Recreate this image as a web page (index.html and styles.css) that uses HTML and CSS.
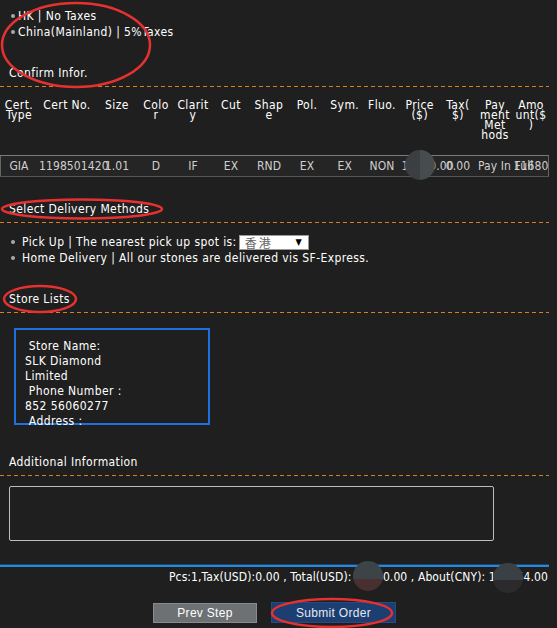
FILE: index.html
```html
<!DOCTYPE html>
<html>
<head>
<meta charset="utf-8">
<link rel="stylesheet" href="styles.css">
</head>
<body>
<div class="page">
  <ul class="tax-list">
    <li>HK | No Taxes</li>
    <li>China(Mainland) | 5%Taxes</li>
  </ul>

  <h3 class="sec-title first">Confirm Infor.</h3>
  <div class="cert-grid cert-head">
    <div class="cell">Cert.<br>Type</div>
    <div class="cell">Cert No.</div>
    <div class="cell">Size</div>
    <div class="cell">Colo<br>r</div>
    <div class="cell">Clarit<br>y</div>
    <div class="cell">Cut</div>
    <div class="cell">Shap<br>e</div>
    <div class="cell">Pol.</div>
    <div class="cell">Sym.</div>
    <div class="cell">Fluo.</div>
    <div class="cell">Price<br>($)</div>
    <div class="cell">Tax(<br>$)</div>
    <div class="cell">Pay<br>ment<br>Met<br>hods</div>
    <div class="cell">Amo<br>unt($<br>)</div>
  </div>
  <div class="cert-grid cert-row">
    <div class="cell">GIA</div>
    <div class="cell left">1198501420</div>
    <div class="cell">1.01</div>
    <div class="cell">D</div>
    <div class="cell">IF</div>
    <div class="cell">EX</div>
    <div class="cell">RND</div>
    <div class="cell">EX</div>
    <div class="cell">EX</div>
    <div class="cell">NON</div>
    <div class="cell left">11680.00</div>
    <div class="cell">0.00</div>
    <div class="cell left">Pay In Full</div>
    <div class="cell">11680</div>
  </div>

  <h3 class="sec-title">Select Delivery Methods</h3>
  <ul class="delivery-list">
    <li>Pick Up | The nearest pick up spot is:<span class="spot-select"><span class="spot-name">香港</span><span class="spot-arrow">▼</span></span></li>
    <li>Home Delivery | All our stones are delivered vis SF-Express.</li>
  </ul>

  <h3 class="sec-title">Store Lists</h3>
  <div class="store-box">
    <div>&nbsp;Store Name:</div>
    <div>SLK Diamond</div>
    <div>Limited</div>
    <div>&nbsp;Phone Number :</div>
    <div>852 56060277</div>
    <div>&nbsp;Address :</div>
  </div>

  <h3 class="sec-title">Additional Information</h3>
  <div class="note-box"></div>

  <div class="summary">Pcs:1,Tax(USD):0.00 , Total(USD): 11680.00 , About(CNY): 118054.00</div>

  <div class="actions">
    <button class="btn btn-prev">Prev Step</button>
    <button class="btn btn-submit">Submit Order</button>
  </div>

  <div class="blob blob-table"></div>
  <div class="blob blob-total"></div>
  <div class="blob blob-cny"></div>

  <svg class="marks" width="557" height="628" viewBox="0 0 557 628">
    <ellipse cx="76" cy="45" rx="74" ry="42" />
    <ellipse cx="82" cy="209" rx="80" ry="9.5" />
    <ellipse cx="40" cy="299" rx="36" ry="13" />
    <ellipse cx="332" cy="613" rx="60" ry="14" />
  </svg>
</div>
</body>
</html>
```

FILE: styles.css
```css
html, body {
  margin: 0;
  padding: 0;
}

body {
  background: #1f1f1f;
  color: #ffffff;
  font-family: "DejaVu Sans Condensed", "DejaVu Sans", sans-serif;
  font-stretch: condensed;
  font-size: 12px;
  letter-spacing: 0.4px;
}

.page {
  position: relative;
  width: 549px;
  height: 628px;
}

.tax-list {
  list-style: none;
  margin: 0;
  padding: 8px 0 0 11px;
  line-height: 16px;
}

.tax-list li,
.delivery-list li {
  display: flex;
  align-items: center;
}

.tax-list li::before,
.delivery-list li::before {
  content: "";
  width: 4px;
  height: 4px;
  border-radius: 50%;
  background: #a9a9a9;
  flex: none;
}

.tax-list li::before {
  margin-right: 3px;
}

.delivery-list li::before {
  margin-right: 7px;
}

.sec-title {
  margin: 25px 0 0;
  padding: 0 0 0 9px;
  font-size: 12px;
  font-weight: normal;
  line-height: 16px;
}

.sec-title::after {
  content: "";
  display: block;
  height: 1px;
  margin: 5px 0 0 -9px;
  background: repeating-linear-gradient(90deg, #d8801f 0 4px, transparent 4px 7px);
}

.cert-grid {
  display: grid;
  grid-template-columns: 38px 58px 42px 36px 38px 38px 38px 38px 37.5px 37px 38.5px 38px 36px 36px;
}

.cert-head {
  height: 68px;
  padding-top: 13px;
  box-sizing: border-box;
  line-height: 10px;
  align-items: start;
}

.cell {
  text-align: center;
  white-space: nowrap;
  min-width: 0;
}

.cell.left {
  text-align: left;
  padding-left: 1px;
}

.cert-row {
  height: 22px;
  line-height: 22px;
  color: #cfcfcf;
  background: #252525;
  letter-spacing: 0.1px;
  box-shadow: inset 0 1px #7a7a7a, inset 0 -1px #555555, inset 1px 0 #666666, inset -1px 0 #666666;
}

.cert-row + .sec-title {
  margin-top: 24px;
}

.delivery-list {
  list-style: none;
  margin: 11px 0 0;
  padding: 0 0 0 11px;
  line-height: 16px;
}

.spot-select {
  display: inline-flex;
  align-items: center;
  justify-content: space-between;
  width: 70px;
  height: 15px;
  margin-left: 2px;
  padding: 0 6px 0 5px;
  box-sizing: border-box;
  background: #ffffff;
  border: 1px solid #9a9a9a;
  color: #666666;
  font-family: "Noto Sans CJK SC", sans-serif;
  font-size: 12px;
  line-height: 13px;
  letter-spacing: 2px;
}

.spot-arrow {
  color: #000000;
  font-family: "DejaVu Sans", sans-serif;
  font-size: 9px;
  letter-spacing: 0;
}

.store-box {
  margin: 15px 0 0 14px;
  width: 196px;
  height: 97px;
  box-sizing: border-box;
  border: 2px solid #1f6fdc;
  padding: 9px 0 0 9px;
  line-height: 15px;
}

.store-box + .sec-title {
  margin-top: 29px;
}

.note-box {
  margin: 10px 0 0 9px;
  width: 485px;
  height: 55px;
  box-sizing: border-box;
  border: 1px solid #bdbdbd;
  border-radius: 2px;
}

.summary {
  margin-top: 24px;
  border-top: 2px solid #2b88d6;
  box-shadow: 0 -1px #154676;
  padding: 2px 1px 0 0;
  line-height: 16px;
  text-align: right;
  letter-spacing: 0.1px;
}

.actions {
  display: flex;
  justify-content: center;
  align-items: center;
  gap: 14px;
  margin-top: 17px;
}

.btn {
  font-family: "Liberation Sans", Arial, sans-serif;
  font-size: 12px;
  letter-spacing: 0.3px;
  padding: 0;
  margin: 0;
  box-sizing: border-box;
}

.btn-prev {
  width: 104px;
  height: 20px;
  background: #6e7174;
  border: 1px solid #8a8a8a;
  color: #ffffff;
}

.btn-submit {
  width: 125px;
  height: 21px;
  background: #1d3e70;
  border: 1px solid #254b82;
  color: #e2e8f2;
}

.blob {
  position: absolute;
  width: 30px;
  height: 30px;
  border-radius: 50%;
}

.blob-table {
  left: 405px;
  top: 150px;
  background: linear-gradient(90deg, #3b3f42 0 50%, #474c4e 50% 100%);
}

.blob-total {
  left: 353px;
  top: 561px;
  background: linear-gradient(180deg, #3c4448 0 60%, #4a2f30 60% 100%);
}

.blob-cny {
  left: 493px;
  top: 563px;
  background: linear-gradient(180deg, #3a4044 0 57%, #2b2b2d 57% 100%);
}

.marks {
  position: absolute;
  left: 0;
  top: 0;
  pointer-events: none;
  overflow: visible;
}

.marks ellipse {
  fill: none;
  stroke: #e5312f;
  stroke-width: 2.5;
}
```
